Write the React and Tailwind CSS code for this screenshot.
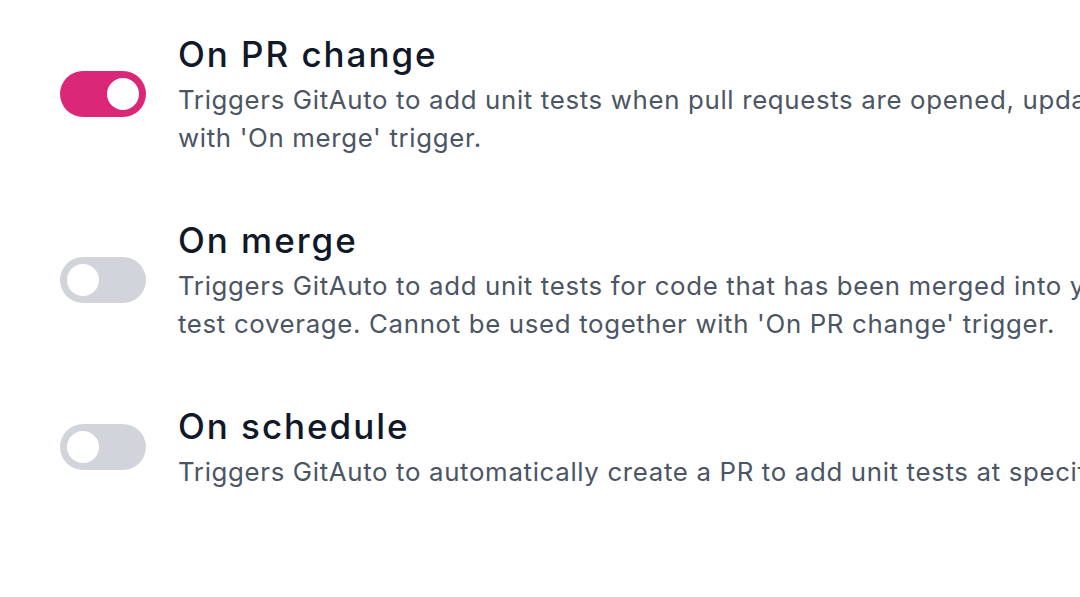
import React, { useState } from "react";

const TRIGGERS = [
  {
    key: "pr",
    title: "On PR change",
    lines: [
      "Triggers GitAuto to add unit tests when pull requests are opened, updated, or reopened. Cannot be used together",
      "with 'On merge' trigger.",
    ],
    on: true,
  },
  {
    key: "merge",
    title: "On merge",
    lines: [
      "Triggers GitAuto to add unit tests for code that has been merged into your default branch to maintain",
      "test coverage. Cannot be used together with 'On PR change' trigger.",
    ],
    on: false,
  },
  {
    key: "schedule",
    title: "On schedule",
    lines: ["Triggers GitAuto to automatically create a PR to add unit tests at specified times."],
    on: false,
  },
];

function Toggle({ on, onClick }) {
  return (
    <button
      type="button"
      onClick={onClick}
      className={`flex h-[46px] w-[86px] shrink-0 items-center rounded-full p-[7px] ${
        on ? "justify-end bg-[#db2777]" : "justify-start bg-[#d1d5db]"
      }`}
    >
      <span className="block h-[32px] w-[32px] rounded-full bg-white" />
    </button>
  );
}

export default function App() {
  const [state, setState] = useState(
    Object.fromEntries(TRIGGERS.map((t) => [t.key, t.on]))
  );

  return (
    <div
      className="h-[597px] w-[1080px] overflow-hidden bg-white pl-[60px] pt-[31px]"
      style={{ fontFamily: "Inter, 'Noto Sans', sans-serif" }}
    >
      <div className="flex flex-col gap-[59px]">
        {TRIGGERS.map((t) => (
          <div key={t.key} className="flex items-center gap-[32px]">
            <Toggle
              on={state[t.key]}
              onClick={() => setState({ ...state, [t.key]: !state[t.key] })}
            />
            <div className="flex min-w-0 flex-col">
              <h3 className="mb-[4px] whitespace-nowrap text-[35px] font-medium leading-[46px] tracking-[0.056em] text-[#111827]">
                {t.title}
              </h3>
              {t.lines.map((l, i) => (
                <p
                  key={i}
                  className="whitespace-nowrap text-[25.8px] leading-[38.4px] tracking-[0.026em] text-[#4b5563]"
                >
                  {l}
                </p>
              ))}
            </div>
          </div>
        ))}
      </div>
    </div>
  );
}
